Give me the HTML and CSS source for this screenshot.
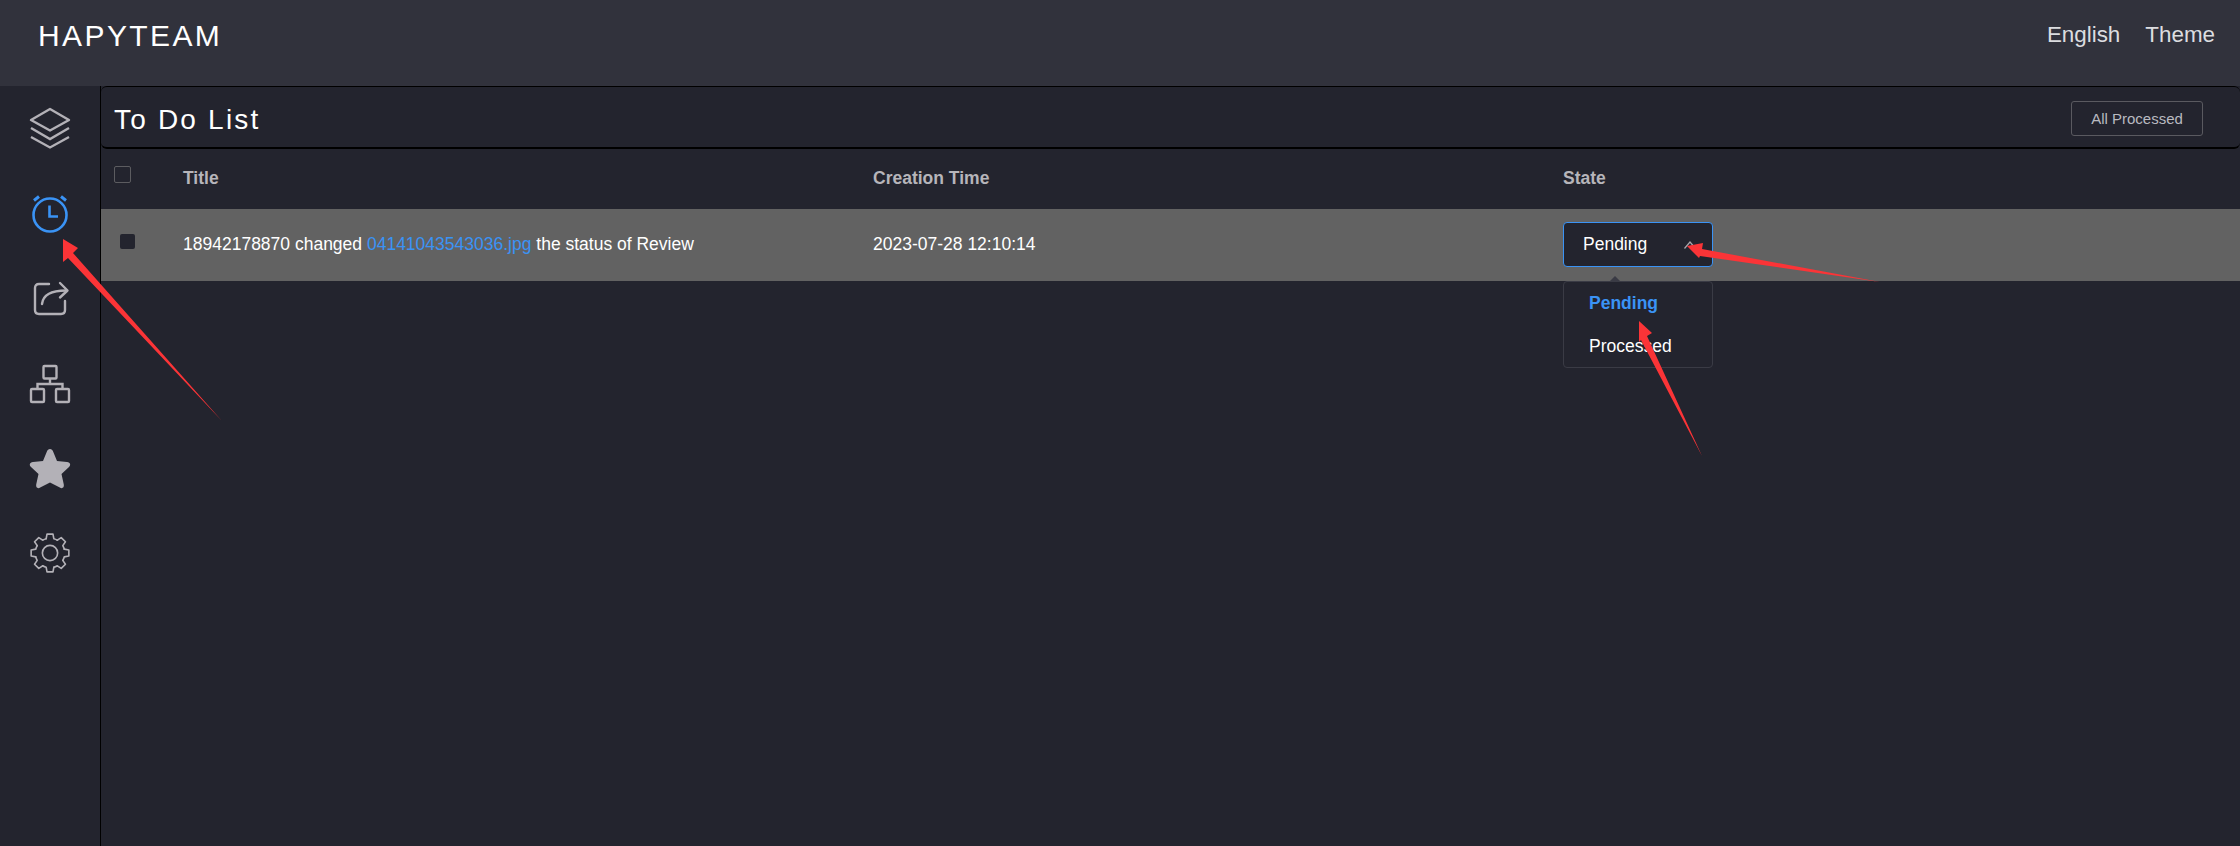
FILE: index.html
```html
<!DOCTYPE html>
<html lang="en">

<head>
    <meta charset="UTF-8">
    <title>To Do List</title>
    <link rel="stylesheet" href="styles.css">
</head>

<body>
<header class="topbar">
    <div class="logo">HAPYTEAM</div>
    <nav class="topnav">
        <span>English</span>
        <span>Theme</span>
    </nav>
</header>

<div class="layout">
    <aside class="sidebar">
        <a class="side-item">
            <svg class="icon-up" width="44" height="44" viewBox="0 0 44 44" fill="none" stroke="currentColor" stroke-width="2.4">
                <path d="M22 3 L41 14 L22 24.500 L3 14 Z" stroke-linejoin="round"/>
                <path d="M3 22 L22 33 L41 22"/>
                <path d="M3 31 L22 41.500 L41 31"/>
            </svg>
        </a>
        <a class="side-item active">
            <svg class="icon-up" width="44" height="44" viewBox="0 0 44 44" fill="none" stroke="currentColor" stroke-width="2.600">
                <circle cx="22" cy="24" r="16.500"/>
                <path d="M21.500 14.500 V25.500 H30" stroke-width="2.600"/>
                <path d="M6 9.500 L11 5.500 M38 9.500 L33 5.500" stroke-width="3"/>
            </svg>
        </a>
        <a class="side-item">
            <svg width="44" height="44" viewBox="0 0 44 44" fill="none" stroke="currentColor" stroke-width="2.400" stroke-linecap="round" stroke-linejoin="round">
                <path d="M21 7 H11 Q7 7 7 11 V33 Q7 37 11 37 H33 Q37 37 37 33 V24"/>
                <path d="M14 27 C15 18 22 13.500 38 13.500"/>
                <path d="M32 6 L39.500 13.500 L32 20.500"/>
            </svg>
        </a>
        <a class="side-item">
            <svg width="44" height="44" viewBox="0 0 44 44" fill="none" stroke="currentColor" stroke-width="2.400">
                <rect x="15.500" y="4" width="13" height="12.500" rx="1"/>
                <rect x="3" y="27" width="13" height="13" rx="1"/>
                <rect x="28" y="27" width="13" height="13" rx="1"/>
                <path d="M22 16.500 V22 M9.500 27 V22 H34.500 V27"/>
            </svg>
        </a>
        <a class="side-item">
            <svg width="44" height="44" viewBox="0 0 44 44" fill="currentColor">
                <path d="M22 2 C23.500 2 24.500 3 25.200 4.800 L29 14 L39 15 C42.500 15.400 43 18 41 20 L33.500 27 L35.800 37.500 C36.300 40.500 34.300 42 31.800 40.600 L22 35.500 L12.200 40.600 C9.700 42 7.700 40.500 8.200 37.500 L10.500 27 L3 20 C1 18 1.500 15.400 5 15 L15 14 L18.800 4.800 C19.500 3 20.500 2 22 2 Z"/>
            </svg>
        </a>
        <a class="side-item">
            <svg class="icon-up" width="42" height="42" viewBox="0 0 44 44" fill="none" stroke="currentColor" stroke-width="1.700" stroke-linejoin="round" stroke-linecap="round">
                <defs>
                    <path id="gearTooth" d="M17.990 7.030 L18.870 2.250 H25.130 L26.010 7.030 A15.500 15.500 0 0 1 29.750 8.580"/>
                </defs>
                <circle cx="22" cy="22" r="8"/>
                <use href="#gearTooth"/>
                <use href="#gearTooth" transform="rotate(45 22 22)"/>
                <use href="#gearTooth" transform="rotate(90 22 22)"/>
                <use href="#gearTooth" transform="rotate(135 22 22)"/>
                <use href="#gearTooth" transform="rotate(180 22 22)"/>
                <use href="#gearTooth" transform="rotate(225 22 22)"/>
                <use href="#gearTooth" transform="rotate(270 22 22)"/>
                <use href="#gearTooth" transform="rotate(315 22 22)"/>
            </svg>
        </a>
    </aside>

    <main class="content">
        <div class="panel-head">
            <h1 class="panel-title">To Do List</h1>
            <button class="btn-outline">All Processed</button>
        </div>

        <div class="table-row table-head">
            <div class="cell-check"><span class="check"></span></div>
            <div>Title</div>
            <div>Creation Time</div>
            <div>State</div>
        </div>

        <div class="table-row table-item">
            <div class="cell-check"><span class="check-dark"></span></div>
            <div>18942178870 changed <a class="file-link">04141043543036.jpg</a> the status of Review</div>
            <div>2023-07-28 12:10:14</div>
            <div class="state-cell">
                <div class="select-box">
                    <span>Pending</span>
                    <svg width="12" height="8" viewBox="0 0 12 8" fill="none" stroke="#a8a8ae" stroke-width="1.200"><path d="M0.500 7.500 L6 1 L11.500 7.500"/></svg>
                </div>
                <div class="dropdown">
                    <div class="dropdown-arrow"></div>
                    <div class="option option-on">Pending</div>
                    <div class="option">Processed</div>
                </div>
            </div>
        </div>
    </main>
</div>

<!-- red annotation arrows drawn over the screenshot -->
<svg class="arrows" width="2240" height="846" viewBox="0 0 2240 846">
    <path d="M63 239 L78 248 L73 253 L222 421 L68 258 L63 262 Z"/>
    <path d="M1687 246 L1703 243 L1702 249 L1880 282 L1700 256 L1699 258 Z"/>
    <path d="M1639 321 L1652 333 L1647 336 L1702 456 L1641 340 L1639 342 Z"/>
</svg>
</body>

</html>
```

FILE: styles.css
```css
* {
    box-sizing: border-box;
}

body {
    margin: 0;
    height: 846px;
    overflow: hidden;
    background: #23242e;
    color: #fff;
    font-family: "Liberation Sans", Arial, sans-serif;
    font-size: 17.500px;
}

.topbar {
    height: 86px;
    background: #31323c;
    display: flex;
    justify-content: space-between;
    padding: 16px 25px 0 38px;
}

.logo {
    font-size: 30px;
    line-height: 40px;
    letter-spacing: 2.400px;
}

.topnav {
    display: flex;
    gap: 25px;
    font-size: 22.400px;
    line-height: 38px;
    color: #dcdde0;
}

.layout {
    display: flex;
    height: 760px;
}

.sidebar {
    width: 101px;
    flex-shrink: 0;
    border-right: 1px solid #000;
}

.side-item {
    height: 85px;
    display: flex;
    align-items: center;
    justify-content: center;
    color: #b3b1b7;
}

.side-item.active {
    color: #3a93f5;
}

.icon-up {
    margin-top: -2px;
}

.content {
    flex: 1;
}

.panel-head {
    height: 63px;
    display: flex;
    align-items: center;
    justify-content: space-between;
    padding: 0 37px 0 13px;
    border-top: 1px solid #000;
    border-bottom: 2px solid #000;
    border-radius: 6px;
}

.panel-title {
    margin: 6px 0 0;
    font-size: 28px;
    font-weight: normal;
    letter-spacing: 2.200px;
}

.btn-outline {
    width: 132px;
    height: 35px;
    margin-top: 3px;
    background: transparent;
    border: 1px solid #5a5a60;
    border-radius: 3px;
    color: #b9bac0;
    font-family: inherit;
    font-size: 15px;
}

.table-row {
    display: grid;
    grid-template-columns: 82px 690px 690px 1fr;
    align-items: center;
    padding-bottom: 2px;
}

.table-head {
    height: 60px;
    color: #b6b5ba;
    font-weight: bold;
}

.table-item {
    height: 72px;
    background: #626262;
}

.cell-check {
    padding-left: 13px;
    display: flex;
}

.check {
    width: 17px;
    height: 17px;
    margin-top: -8px;
    border: 1px solid #5c5c60;
    border-radius: 2px;
}

.check-dark {
    width: 15px;
    height: 15px;
    margin: -6px 0 0 6px;
    background: #23242e;
    border-radius: 2px;
}

.file-link {
    color: #3a93f5;
}

.state-cell {
    position: relative;
}

.select-box {
    width: 150px;
    height: 45px;
    margin-bottom: -1px;
    display: flex;
    align-items: center;
    justify-content: space-between;
    padding: 0 16px 0 19px;
    background: #23242e;
    border: 1px solid #3a93f5;
    border-radius: 4px;
}

.dropdown {
    position: absolute;
    top: 59px;
    left: 0;
    width: 150px;
    height: 87px;
    padding: 6px 0;
    background: #23242e;
    border: 1px solid #3a3b45;
    border-radius: 4px;
}

.dropdown-arrow {
    position: absolute;
    top: -6px;
    left: 45px;
    width: 0;
    height: 0;
    border-left: 6px solid transparent;
    border-right: 6px solid transparent;
    border-bottom: 6px solid #3a3b45;
}

.option {
    height: 43px;
    line-height: 30px;
    padding-left: 25px;
}

.option-on {
    color: #3a93f5;
    font-weight: bold;
}

.arrows {
    position: absolute;
    top: 0;
    left: 0;
    fill: #fb3437;
    pointer-events: none;
}
```
